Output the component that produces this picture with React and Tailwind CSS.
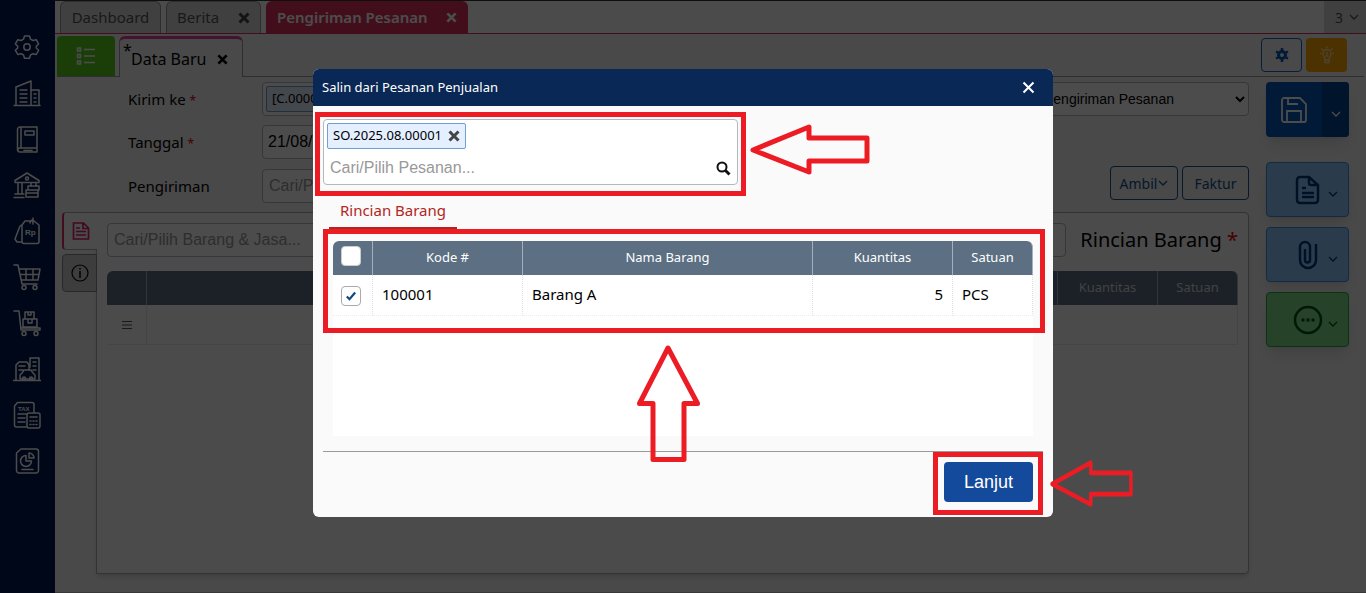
import React, { useState } from 'react';

const SideIcon = ({ children }) => (
  <svg
    width="28"
    height="28"
    viewBox="0 0 28 28"
    fill="none"
    stroke="currentColor"
    strokeWidth="1.5"
    strokeLinejoin="round"
    strokeLinecap="round"
    aria-hidden="true"
  >
    {children}
  </svg>
);

const menus = [
  {
    name: 'Pengaturan',
    icon: (
      <>
        <path d="M11.5 3h5l1 3.2 2.4 1.3 3.3-.8 2.4 4.2-2.3 2.4v1.6l2.3 2.4-2.4 4.2-3.3-.8-2.4 1.3-1 3.2h-5l-1-3.2-2.4-1.3-3.3.8-2.4-4.2 2.3-2.4v-1.6L2.4 10.9l2.4-4.2 3.3.8 2.4-1.3z" />
        <circle cx="14" cy="14" r="3.2" />
      </>
    ),
  },
  {
    name: 'Perusahaan',
    icon: (
      <>
        <path d="M1 26.5h26M3 26V8l15-6v24M18 11h8v15" />
        <path d="M7 11h7M7 15h7M7 19h7M7 23h7M21 15h2M21 19h2M21 23h2" strokeWidth="1.3" />
      </>
    ),
  },
  {
    name: 'Buku Besar',
    icon: (
      <>
        <path d="M7 2h17v21H7a2.5 2.5 0 0 0-2.5 2.5V4.5A2.5 2.5 0 0 1 7 2zM5 25.5c0 1 1 1.5 2 1.5h17v-4M8 2v21M12 6h9v4h-9z" />
        <path d="M11 25.5h8" />
      </>
    ),
  },
  {
    name: 'Kas & Bank',
    icon: (
      <>
        <path d="M2 9.500 14 2l12 7.500v2H2zM5 12v11M9 12v11M18 12v3M23 12v3M2 23h9M1 26.500h10" />
        <circle cx="14" cy="7.5" r="1.5" />
        <path d="M15 15h11v4H15zM13 19h12v7H13zM13 22h12" />
      </>
    ),
  },
  {
    name: 'Penjualan',
    icon: (
      <>
        <path d="M12 4h9l5 4v16.500a2 2 0 0 1-2 2H11a2 2 0 0 1-2-2V8zM10 7 7 9 2 22l2 3h5M17 6c0-2 1-3 3-3M20 1v6" />
        <text x="12" y="18" fontSize="8" fontWeight="bold" fill="currentColor" stroke="none" fontFamily="Liberation Sans, sans-serif">
          Rp
        </text>
      </>
    ),
  },
  {
    name: 'Pembelian',
    icon: (
      <>
        <path d="M1 2h4l4 19h15M6 6h21l-2 11H8M7 11.5h19M13 6v11M20 6v11" />
        <circle cx="11" cy="24.5" r="2" />
        <circle cx="22" cy="24.5" r="2" />
      </>
    ),
  },
  {
    name: 'Persediaan',
    icon: (
      <>
        <path d="M1 2h5l2 19h19v-2H8M12 3h9v7h-9zM10 10h14v8H10zM15 3v3h3V3M15 10v4h4v-4" />
        <circle cx="11" cy="24.5" r="2" />
        <circle cx="23" cy="24.5" r="2" />
      </>
    ),
  },
  {
    name: 'Aset Tetap',
    icon: (
      <>
        <path d="M0 25.5h28M3 25V10l3-3h8l2 3v5M17 12V3h9v22M20 7h3M20 11h3M20 15h3M6 11h6M6 15h4" />
        <path d="m9 18 2-3h7l2 3 2 2v4H7v-4z" />
        <circle cx="11" cy="23.5" r="1.5" />
        <circle cx="18" cy="23.5" r="1.5" />
      </>
    ),
  },
  {
    name: 'Pajak',
    icon: (
      <>
        <path d="M13 26H3.5A2 2 0 0 1 1.500 24V5l3-3.500H19a2 2 0 0 1 2 2V11M5 13h8M5 17h7M5 21h7M16 12h9a2 2 0 0 1 2 2v11a2 2 0 0 1-2 2h-9a2 2 0 0 1-2-2V14a2 2 0 0 1 2-2zM17 16h7" />
        <path d="M17 20h1M20 20h1M23 20h1M17 23.5h1M20 23.5h1M23 23.5h1" />
        <text x="5" y="10" fontSize="6" fontWeight="bold" fill="currentColor" stroke="none" fontFamily="Liberation Sans, sans-serif">
          TAX
        </text>
      </>
    ),
  },
  {
    name: 'Laporan',
    icon: (
      <>
        <path d="M8 2h15a2.5 2.5 0 0 1 2.5 2.5v19A2.5 2.5 0 0 1 23 26H6a2.5 2.5 0 0 1-2.5-2.5V6zM9 22.5h11" />
        <path d="M13 8.5a5.5 5.5 0 1 0 5.5 5.500H13zM16 6v5h5a5 5 0 0 0-5-5z" />
      </>
    ),
  },
];

const CloseIcon = ({ size = 12 }) => (
  <svg width={size} height={size} viewBox="0 0 12 12" stroke="currentColor" strokeWidth="3" aria-hidden="true">
    <path d="M1.500 1.500l9 9M10.500 1.500l-9 9" />
  </svg>
);

const Chevron = () => (
  <svg width="10" height="6" viewBox="0 0 10 6" fill="none" stroke="currentColor" strokeWidth="1.3" aria-hidden="true">
    <path d="M1 1l4 4 4-4" />
  </svg>
);

const Required = () => <span className="text-[12px] text-red-600">*</span>;

const ArrowLeft = ({ className }) => (
  <svg className={className} viewBox="0 0 120 54" preserveAspectRatio="none" fill="none" stroke="#ec1c24" strokeWidth="5" strokeLinejoin="round" aria-hidden="true">
    <path d="M3 27 59 4v11h58v23H59v11z" />
  </svg>
);

const actions = [
  {
    name: 'Dokumen',
    tone: 'bg-[#8cc8ff] border-[#3d8fe0] text-[#003a80]',
    icon: <path d="M7 2h9l9 8v15a3 3 0 0 1-3 3H7a3 3 0 0 1-3-3V5a3 3 0 0 1 3-3zM16 2v6a2 2 0 0 0 2 2h7M9 13h4M9 18h12M9 22h12" />,
  },
  {
    name: 'Lampiran',
    tone: 'bg-[#8cc8ff] border-[#3d8fe0] text-[#003a80]',
    icon: <path d="M23 4v16a8 8 0 0 1-16 0V7a5 5 0 0 1 10 0v13a2.500 2.500 0 0 1-5 0V9" />,
  },
  {
    name: 'Lainnya',
    tone: 'bg-[#80dc88] border-[#28a745] text-[#005010]',
    icon: (
      <>
        <circle cx="15" cy="15" r="13" />
        <path d="M8.5 15h3M13.500 15h3M18.500 15h3" strokeWidth="3" />
      </>
    ),
  },
];

const items = [{ code: '100001', name: 'Barang A', qty: 5, unit: 'PCS' }];

const Modal = () => {
  const [orders, setOrders] = useState(['SO.2025.08.00001']);
  const [checked, setChecked] = useState({ 100001: true });
  const [all, setAll] = useState(false);

  const handleAll = (e) => {
    setAll(e.target.checked);
    setChecked(Object.fromEntries(items.map((i) => [i.code, e.target.checked])));
  };

  return (
    <div className="fixed inset-0 z-10 flex items-start justify-center bg-black/70 pt-[69px]">
      <div role="dialog" aria-label="Salin dari Pesanan Penjualan" className="relative w-[740px] rounded-md bg-[#fafafa]">
        <header className="flex h-[37px] items-center justify-between rounded-t-md bg-[#0a2855] pr-[18px] pl-[9px] text-white">
          <h2 className="text-[13px]">Salin dari Pesanan Penjualan</h2>
          <button type="button" aria-label="Tutup">
            <svg width="13" height="13" viewBox="0 0 13 13" stroke="currentColor" strokeWidth="2" aria-hidden="true">
              <path d="M1.500 1.500l10 10M11.500 1.500l-10 10" />
            </svg>
          </button>
        </header>

        <div className="px-[10px] pt-[13px] pb-[15px]">
          <div className="relative w-[415px]">
            <div className="rounded border border-[#b4b8bd] bg-white p-[3px]">
              {orders.map((no) => (
                <span key={no} className="inline-flex h-[26px] items-center gap-[6px] rounded-xs border border-[#6fa0cf] bg-[#e4efff] px-[5px] align-top text-[13px] text-black">
                  {no}
                  <button type="button" aria-label={`Hapus ${no}`} className="text-[#444]" onClick={() => setOrders(orders.filter((o) => o !== no))}>
                    <CloseIcon />
                  </button>
                </span>
              ))}
              <div className="flex h-[32px] items-center justify-between pt-[6px] pr-[3px] pl-[3px]">
                <input
                  type="text"
                  aria-label="Cari/Pilih Pesanan"
                  placeholder="Cari/Pilih Pesanan..."
                  className="w-full font-['Liberation_Sans',sans-serif] text-[16px] outline-none placeholder:text-[#999]"
                />
                <button type="button" aria-label="Cari">
                  <svg width="15" height="15" viewBox="0 0 15 15" fill="none" stroke="#111" strokeWidth="2" aria-hidden="true">
                    <circle cx="6" cy="6" r="4.5" />
                    <path d="M9.500 9.500l4 4" strokeWidth="3" />
                  </svg>
                </button>
              </div>
            </div>
            <div className="pointer-events-none absolute -inset-x-2 -top-[7px] -bottom-[11px] border-5 border-[#ec1c24]" />
          </div>

          <div className="mt-2 ml-[6px] flex">
            <button type="button" className="h-9 w-[128px] border-b-2 border-[#b3261e] text-[15px] text-[#b3261e]">
              Rincian Barang
            </button>
          </div>

          <div className="relative mx-[10px] mt-[12px] h-[195px] bg-white">
            <table className="w-full table-fixed border-separate border-spacing-0">
              <colgroup>
                <col className="w-[40px]" />
                <col className="w-[150px]" />
                <col />
                <col className="w-[140px]" />
                <col className="w-[80px]" />
              </colgroup>
              <thead>
                <tr className="h-[34px] text-[13px] text-white [&>th]:border-r [&>th]:border-[#a4b0bd] [&>th]:bg-[#5c6f83] [&>th]:p-0 [&>th]:font-normal">
                  <th className="rounded-tl-md">
                    <input
                      type="checkbox"
                      aria-label="Pilih semua"
                      checked={all}
                      onChange={handleAll}
                      className="-mt-1 ml-2 block size-5 appearance-none rounded border border-[#ccc] bg-white"
                    />
                  </th>
                  <th>Kode #</th>
                  <th>Nama Barang</th>
                  <th>Kuantitas</th>
                  <th className="rounded-tr-md">Satuan</th>
                </tr>
              </thead>
              <tbody>
                {items.map((item) => (
                  <tr key={item.code} className="h-[41px] text-[15px] text-black [&>td]:border-r [&>td]:border-b [&>td]:border-r-[#ddd] [&>td]:border-b-[#eee] [&>td]:border-dotted [&>td]:px-[9px] [&>td]:pt-0 [&>td]:pb-[2px]">
                    <td className="!px-2 !pt-[2px] !pb-0">
                      <label className="relative flex size-5 items-center justify-center">
                        <input
                          type="checkbox"
                          aria-label={`Pilih ${item.name}`}
                          checked={!!checked[item.code]}
                          onChange={(e) => setChecked({ ...checked, [item.code]: e.target.checked })}
                          className="size-5 shrink-0 appearance-none rounded border border-[#aaa] bg-white"
                        />
                        {checked[item.code] && (
                          <svg className="absolute" width="10" height="10" viewBox="0 0 10 10" fill="none" stroke="#13487a" strokeWidth="2.2" aria-hidden="true">
                            <path d="M.8 5.500 3.500 8.200 9.200 1.500" />
                          </svg>
                        )}
                      </label>
                    </td>
                    <td>{item.code}</td>
                    <td>{item.name}</td>
                    <td className="text-right">{item.qty}</td>
                    <td>{item.unit}</td>
                  </tr>
                ))}
              </tbody>
            </table>
            <div className="pointer-events-none absolute -top-3 -right-3 -left-[10px] h-[104px] border-5 border-[#ec1c24]" />
            <svg className="absolute top-[103px] left-[303px]" width="64" height="120" viewBox="0 0 64 120" fill="none" stroke="#ec1c24" strokeWidth="5" strokeLinejoin="round" aria-hidden="true">
              <path d="M32 4 61.500 59.500H48v56H17v-56H3.500z" />
            </svg>
          </div>

          <footer className="mt-[15px] flex justify-end border-t border-[#999] pt-[10px] pr-[10px]">
            <div className="relative">
              <button type="button" className="h-10 w-[89px] rounded bg-[#144a9c] font-['Liberation_Sans',sans-serif] text-[18px] font-medium text-white">
                Lanjut
              </button>
              <div className="pointer-events-none absolute -top-[10px] -right-[10px] -bottom-[13px] -left-[11px] border-5 border-[#ec1c24]" />
              <ArrowLeft className="absolute top-[-3px] left-[106px] h-[50px] w-[83px]" />
            </div>
          </footer>
        </div>
        <ArrowLeft className="absolute top-[54px] left-[437px] h-[54px] w-[120px]" />
      </div>
    </div>
  );
};

const labelClass = 'w-[134px] shrink-0 text-[15px] text-black';

const App = () => (
  <div className="flex min-h-screen bg-[#f4f4f4] font-['Noto_Sans',sans-serif] text-black">
    <aside className="w-[55px] shrink-0 bg-[#001a50] pt-[33px] pr-px text-white">
      <nav className="flex flex-col items-center gap-[18px]">
        {menus.map((m) => (
          <a key={m.name} href="#" aria-label={m.name}>
            <SideIcon>{m.icon}</SideIcon>
          </a>
        ))}
      </nav>
    </aside>

    <main className="flex min-w-0 flex-1 flex-col border-y border-t-[#333] border-b-[#bbb]">
      <div className="flex h-[33px] items-stretch gap-[5px] border-b border-[#e0305c] bg-[#fafafa] pl-[5px] text-[15px]">
        <button type="button" className="w-[101px] rounded-t-md border border-b-0 border-[#999] bg-[#d8d8d8] text-[#555]">
          Dashboard
        </button>
        <div className="flex w-[95px] items-center justify-between rounded-t-md border border-b-0 border-[#999] bg-[#d8d8d8] pr-[10px] pl-[10px] text-[#555]">
          <button type="button">Berita</button>
          <button type="button" aria-label="Tutup Berita" className="text-[#444]"><CloseIcon /></button>
        </div>
        <div className="flex w-[202px] items-center justify-between rounded-t-md bg-[#e0305c] px-[11px] font-semibold text-white">
          <button type="button">Pengiriman Pesanan</button>
          <button type="button" aria-label="Tutup Pengiriman Pesanan"><CloseIcon size={11} /></button>
        </div>
        <button type="button" className="ml-auto flex w-[42px] items-center justify-center gap-[6px] bg-[#d8d8d8] pl-1 text-[14px] text-[#555]">
          3 <Chevron />
        </button>
      </div>

      <div className="mr-[2px] ml-[2px] flex h-[43px] items-end gap-1 border-b border-[#999] pr-[17px]">
        <button type="button" aria-label="Daftar" className="flex h-10 w-[58px] items-center justify-center rounded-t bg-[#5cd020] text-white">
          <svg width="20" height="20" viewBox="0 0 20 20" fill="none" stroke="currentColor" strokeWidth="1.5" aria-hidden="true">
            <path d="M1.500 2h3v3h-3zM1.500 8.500h3v3h-3zM1.500 15h3v3h-3zM8 3.500h11M8 10h11M8 16.500h11" />
          </svg>
        </button>
        <div className="relative -mb-px flex h-[41px] w-[124px] items-center justify-between rounded-t-md border border-t-3 border-b-0 border-[#999] border-t-[#e040a0] bg-[#f4f4f4] pt-[2px] pr-[14px] pl-[11px] text-[16px]">
          <span className="absolute top-[3px] left-[3px] leading-4">*</span>
          <button type="button">Data Baru</button>
          <button type="button" aria-label="Tutup Data Baru"><CloseIcon size={11} /></button>
        </div>
        <div className="mb-1 ml-auto flex gap-1">
          <button type="button" aria-label="Pengaturan" className="flex h-[34px] w-[41px] items-center justify-center rounded border border-[#1464c0] text-[#0058b8]">
            <svg width="14" height="14" viewBox="0 0 14 14" fill="none" stroke="currentColor" strokeWidth="3" aria-hidden="true">
              <circle cx="7" cy="7" r="3.5" />
              <path d="M7 0v3M7 11v3M1 3.500l2 1M11 9.500l2 1M13 3.500l-2 1M3 9.500l-2 1" strokeWidth="2.5" />
            </svg>
          </button>
          <button type="button" aria-label="Tips" className="flex h-[34px] w-[41px] items-center justify-center rounded bg-[#ffa800] text-[#ffe0a8]">
            <svg width="14" height="18" viewBox="0 0 14 18" fill="none" stroke="currentColor" strokeWidth="1.3" aria-hidden="true">
              <path d="M5 13c0-2-2-3-2-5.500a4 4 0 0 1 8 0C11 10 9 11 9 13v3.500H5zM5 14h4M7 6v5M7 0v2M1.500 2.500 3 4M12.500 2.500 11 4M0 7.500h1.500M12.500 7.500H14" />
            </svg>
          </button>
        </div>
      </div>

      <div className="flex flex-1 gap-[17px] pt-[5px] pr-[17px] pb-[18px] pl-[7px]">
        <div className="flex min-w-0 flex-1 flex-col">
          <div className="pl-[66px]">
            <div className="flex items-center">
              <label htmlFor="kirim" className={labelClass}>Kirim ke <Required /></label>
              <div className="flex h-[34px] w-[400px] items-center rounded border border-[#b4b8bd] bg-white px-[3px]">
                <span className="flex h-[26px] items-center rounded-xs border border-[#6fa0cf] bg-[#e4efff] px-[5px] text-[13px]">[C.0000</span>
                <input id="kirim" type="text" className="min-w-0 flex-1 outline-none" />
              </div>
              <select aria-label="Jenis" className="ml-auto h-[34px] w-[260px] rounded border border-[#b4b8bd] bg-white pr-1 pl-[50px] font-['Liberation_Sans',sans-serif] text-[14px]">
                <option>Pengiriman Pesanan</option>
              </select>
            </div>
            <div className="mt-[9px] flex items-center">
              <label htmlFor="tanggal" className={labelClass}>Tanggal <Required /></label>
              <input id="tanggal" type="text" defaultValue="21/08/2025" className="h-[34px] w-[160px] rounded border border-[#b4b8bd] bg-white px-[5px] font-['Liberation_Sans',sans-serif] text-[16px]" />
            </div>
            <div className="mt-[7px] flex items-start">
              <label htmlFor="pengiriman" className={`${labelClass} leading-10`}>Pengiriman</label>
              <input id="pengiriman" type="text" placeholder="Cari/Pilih..." className="mt-[3px] h-[34px] w-[260px] rounded border border-[#b4b8bd] bg-white px-[6px] font-['Liberation_Sans',sans-serif] text-[16px] placeholder:text-[#999]" />
              <div className="ml-auto flex gap-1 text-[14px] text-[#14508c]">
                <button type="button" className="flex h-[34px] w-[68px] items-center justify-center gap-px rounded border border-[#14508c]">
                  Ambil <Chevron />
                </button>
                <button type="button" className="h-[34px] w-[67px] rounded border border-[#14508c]">Faktur</button>
              </div>
            </div>
          </div>

          <div className="mt-[6px] flex flex-1">
            <div className="relative -mr-px flex w-[35px] flex-col gap-1">
              <button type="button" aria-label="Rincian" className="flex h-[38px] items-center justify-center rounded-l border border-r-0 border-l-2 border-[#aaa] border-l-[#e0305c] bg-[#fafafa] text-[#e0206c]">
                <svg width="18" height="18" viewBox="0 0 18 18" fill="none" stroke="currentColor" strokeWidth="1.7" aria-hidden="true">
                  <path d="M1.500 1h10l5 5v11h-15zM11 1v5.500h5M4 6h4M4 9.500h10M4 13h10" />
                </svg>
              </button>
              <button type="button" aria-label="Info" className="flex h-[38px] items-center justify-center rounded-l border border-[#888] bg-[#ccc]">
                <svg width="18" height="18" viewBox="0 0 18 18" fill="none" stroke="currentColor" strokeWidth="1.2" aria-hidden="true">
                  <circle cx="9" cy="9" r="8" />
                  <path d="M9 4v1.500M9 7v7" strokeWidth="1.5" />
                </svg>
              </button>
            </div>
            <section className="min-w-0 flex-1 rounded-r border border-[#aaa] bg-[#fafafa] px-[10px] pt-[10px] shadow-md">
              <div className="flex items-center gap-[14px]">
                <input
                  type="text"
                  aria-label="Cari/Pilih Barang & Jasa"
                  placeholder="Cari/Pilih Barang & Jasa..."
                  className="h-[34px] min-w-0 flex-1 rounded border border-[#b4b8bd] bg-white px-[6px] font-['Liberation_Sans',sans-serif] text-[16px] placeholder:text-[#999]"
                />
                <h3 className="text-[20px] leading-8">Rincian Barang <span className="text-red-600">*</span></h3>
              </div>
              <table className="mt-[14px] w-full table-fixed border-separate border-spacing-0">
                <colgroup>
                  <col className="w-[40px]" />
                  <col />
                  <col className="w-[100px]" />
                  <col className="w-[80px]" />
                </colgroup>
                <thead>
                  <tr className="h-[34px] text-[13px] text-[#ddd] [&>th]:border-r [&>th]:border-[#a4b0bd] [&>th]:bg-[#5c6f83] [&>th]:p-0 [&>th]:font-normal">
                    <th className="rounded-tl-md" />
                    <th />
                    <th>Kuantitas</th>
                    <th className="rounded-tr-md">Satuan</th>
                  </tr>
                </thead>
                <tbody>
                  <tr className="h-10 [&>td]:border-b [&>td]:border-[#e8e8e8]">
                    <td className="border-r">
                      <svg className="mx-auto" width="10" height="10" viewBox="0 0 10 10" stroke="#555" aria-hidden="true">
                        <path d="M0 1.500h10M0 5h10M0 8.500h10" />
                      </svg>
                    </td>
                    <td />
                    <td />
                    <td className="border-r" />
                  </tr>
                </tbody>
              </table>
            </section>
          </div>
        </div>

        <div className="flex w-[83px] shrink-0 flex-col gap-[10px]">
          <div className="mb-[15px] flex h-[55px] rounded bg-[#0058b8] text-white shadow-lg">
            <button type="button" aria-label="Simpan" className="flex flex-1 items-center justify-center">
              <svg width="26" height="26" viewBox="0 0 26 26" fill="none" stroke="currentColor" strokeWidth="1.8" aria-hidden="true">
                <path d="M3 1h16l6 6v16a2 2 0 0 1-2 2H3a2 2 0 0 1-2-2V3a2 2 0 0 1 2-2zM7 1v6h10M6 25V14h14v11" />
              </svg>
            </button>
            <button type="button" aria-label="Opsi simpan" className="flex w-[27px] items-center justify-center rounded-r bg-[#004494] pt-[9px]">
              <Chevron />
            </button>
          </div>
          {actions.map((a) => (
            <button key={a.name} type="button" aria-label={a.name} className={`flex h-[55px] items-center justify-end gap-[5px] rounded border pr-[10px] shadow-lg ${a.tone}`}>
              <svg width="30" height="30" viewBox="0 0 30 30" fill="none" stroke="currentColor" strokeWidth="2.5" aria-hidden="true">
                {a.icon}
              </svg>
              <span className="pt-2"><Chevron /></span>
            </button>
          ))}
        </div>
      </div>
    </main>

    <Modal />
  </div>
);

export default App;
